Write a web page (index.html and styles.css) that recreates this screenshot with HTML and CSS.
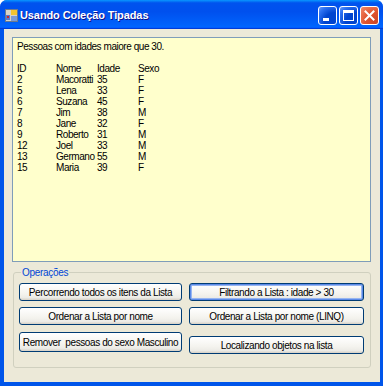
FILE: index.html
```html
<!DOCTYPE html>
<html>
<head>
<meta charset="utf-8">
<link rel="stylesheet" href="styles.css">
</head>
<body>
<div class="window">
  <div class="titlebar">
    <svg class="app-icon" width="13" height="13" viewBox="0 0 13 13">
      <rect x="0.5" y="0.5" width="12" height="12" fill="#d8d4c8" stroke="#6b7a8f"/>
      <rect x="6" y="1" width="6" height="5" fill="#f4c430"/>
      <rect x="1" y="6" width="4" height="5" fill="#5a7bc9"/>
      <rect x="2" y="7" width="2" height="2" fill="#d0262a"/>
      <rect x="6" y="7" width="6" height="5" fill="#7a9ad6"/>
    </svg>
    <span class="title">Usando Coleção Tipadas</span>
    <div class="controls">
      <div class="ctl"><span class="min-glyph"></span></div>
      <div class="ctl"><span class="max-glyph"></span></div>
      <div class="ctl ctl-close">
        <svg width="11" height="11" viewBox="0 0 11 11"><path d="M1.5 1.5 L9.5 9.5 M9.5 1.5 L1.5 9.5" stroke="#fff" stroke-width="2" stroke-linecap="square"/></svg>
      </div>
    </div>
  </div>
  <div class="client">
    <div class="textbox">
      <div class="line">Pessoas com idades maiore que 30.</div>
      <div class="line">&nbsp;</div>
      <div class="table">
        <span>ID</span><span>Nome</span><span>Idade</span><span>Sexo</span>
        <span>2</span><span>Macoratti</span><span>35</span><span>F</span>
        <span>5</span><span>Lena</span><span>33</span><span>F</span>
        <span>6</span><span>Suzana</span><span>45</span><span>F</span>
        <span>7</span><span>Jim</span><span>38</span><span>M</span>
        <span>8</span><span>Jane</span><span>32</span><span>F</span>
        <span>9</span><span>Roberto</span><span>31</span><span>M</span>
        <span>12</span><span>Joel</span><span>33</span><span>M</span>
        <span>13</span><span>Germano</span><span>55</span><span>M</span>
        <span>15</span><span>Maria</span><span>39</span><span>F</span>
      </div>
    </div>
    <fieldset class="group">
      <legend class="group-label">Operações</legend>
      <div class="buttons">
        <button class="btn">Percorrendo todos os itens da Lista</button>
        <button class="btn btn-default">Filtrando a Lista : idade &gt; 30</button>
        <button class="btn">Ordenar a Lista por nome</button>
        <button class="btn">Ordenar a Lista por nome (LINQ)</button>
        <button class="btn btn-tall">Remover&nbsp; pessoas do sexo Masculino</button>
        <button class="btn btn-low">Localizando objetos na lista</button>
      </div>
    </fieldset>
  </div>
</div>
</body>
</html>
```

FILE: styles.css
```css
html, body {
  margin: 0;
  padding: 0;
  background: #ffffff;
}
.window {
  width: 383px;
  height: 386px;
  background: #0055ea;
  border-radius: 7px 7px 0 0;
  display: flex;
  flex-direction: column;
  box-sizing: border-box;
  font-family: "Liberation Sans", Arial, sans-serif;
}
.titlebar {
  height: 29px;
  flex: none;
  display: flex;
  align-items: center;
  padding: 0 4px 0 5px;
  border-radius: 7px 7px 0 0;
  background: linear-gradient(#0997ff 0%, #0053ee 10%, #0050ee 40%, #0062fb 85%, #0066ff 92%, #005bff 95%, #003dd7 97%, #003dd7 100%);
}
.app-icon {
  flex: none;
  margin-top: 1px;
}
.title {
  margin-left: 2px;
  color: #ffffff;
  font-weight: bold;
  font-size: 11px;
  letter-spacing: -0.1px;
  text-shadow: 1px 1px #0f1089;
  flex: 1;
  margin-top: 1px;
}
.controls {
  display: flex;
  gap: 2px;
  margin-top: 1px;
}
.ctl {
  width: 17px;
  height: 17px;
  border: 1px solid #ffffff;
  border-radius: 3px;
  background: radial-gradient(circle at 90% 90%, #0044cf 0%, #0044cf 45%, #2f73f3 80%, #6d9ef7 100%);
  display: flex;
  align-items: center;
  justify-content: center;
}
.ctl-close {
  background: radial-gradient(circle at 90% 90%, #cc4628 0%, #e0542e 50%, #f28a6a 100%);
}
.min-glyph {
  width: 6px;
  height: 3px;
  background: #ffffff;
  margin-top: 8px;
  margin-right: 4px;
}
.max-glyph {
  border: 1px solid #ffffff;
  border-top-width: 3px;
  box-sizing: border-box;
  width: 11px;
  height: 11px;
}
.client {
  flex: 1;
  margin: 0 3px 4px 4px;
  background: #ece9d8;
  padding: 8px 9px 0 8px;
  display: flex;
  flex-direction: column;
}
.textbox {
  height: 225px;
  box-sizing: border-box;
  background: #ffffcc;
  border: 1px solid #7f9db9;
  padding: 3px 4px;
  font-size: 10px;
  line-height: 11px;
  color: #000000;
  letter-spacing: -0.45px;
}
.table {
  display: grid;
  grid-template-columns: 39px 41px 41px auto;
}
.group {
  margin: 5px 0 0 1px;
  padding: 5px 5px 0 5px;
  height: 101px;
  box-sizing: border-box;
  border: 1px solid #d0d0bf;
  border-radius: 3px;
  min-width: 0;
}
.group-label {
  color: #0046d5;
  font-size: 10px;
  padding: 0 1px;
  margin-left: 2px;
  letter-spacing: -0.3px;
}
.buttons {
  display: grid;
  grid-template-columns: 163px 175px;
  grid-template-rows: 18px 18px 22px;
  column-gap: 7px;
  row-gap: 6px;
}
.btn {
  font-family: "Liberation Sans", Arial, sans-serif;
  font-size: 10px;
  letter-spacing: -0.4px;
  color: #000000;
  height: 18px;
  padding: 0;
  border: 1px solid #003c74;
  border-radius: 3px;
  background: linear-gradient(#ffffff 0%, #f4f3ee 60%, #ecebe6 85%, #d6d0c5 100%);
  white-space: nowrap;
}
.btn-default {
  box-shadow: inset 0 0 0 1px #5b8ae8, inset 0 0 0 2px #97b5f0;
}
.btn-tall {
  height: 20px;
  margin-top: 1px;
}
.btn-low {
  margin-top: 5px;
}
```
